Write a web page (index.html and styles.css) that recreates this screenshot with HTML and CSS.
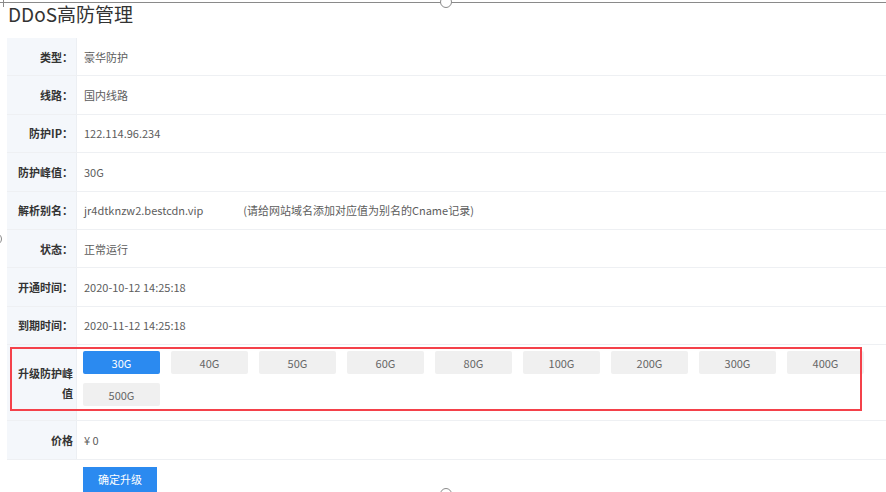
FILE: index.html
```html
<!DOCTYPE html>
<html lang="zh-CN">
<head>
  <meta charset="UTF-8">
  <meta name="viewport" content="width=device-width, initial-scale=1.0">
  <title>DDoS高防管理</title>
  <link rel="stylesheet" href="styles.css">
</head>
<body>
  <div class="frame">
    <h1 class="page-title">DDoS高防管理</h1>

    <div class="info-table">
      <div class="row"><div class="label">类型：</div><div class="value">豪华防护</div></div>
      <div class="row"><div class="label">线路：</div><div class="value">国内线路</div></div>
      <div class="row"><div class="label">防护IP：</div><div class="value">122.114.96.234</div></div>
      <div class="row"><div class="label">防护峰值：</div><div class="value">30G</div></div>
      <div class="row">
        <div class="label">解析别名：</div>
        <div class="value">jr4dtknzw2.bestcdn.vip<span class="hint">(请给网站域名添加对应值为别名的Cname记录)</span></div>
      </div>
      <div class="row"><div class="label">状态：</div><div class="value">正常运行</div></div>
      <div class="row"><div class="label">开通时间：</div><div class="value">2020-10-12 14:25:18</div></div>
      <div class="row"><div class="label">到期时间：</div><div class="value">2020-11-12 14:25:18</div></div>
      <div class="row row-upgrade">
        <div class="label">升级防护峰值</div>
        <div class="value">
          <div class="options">
            <button class="opt active">30G</button>
            <button class="opt">40G</button>
            <button class="opt">50G</button>
            <button class="opt">60G</button>
            <button class="opt">80G</button>
            <button class="opt">100G</button>
            <button class="opt">200G</button>
            <button class="opt">300G</button>
            <button class="opt">400G</button>
            <button class="opt">500G</button>
          </div>
        </div>
        <div class="mark"></div>
      </div>
      <div class="row"><div class="label">价格</div><div class="value">¥ 0</div></div>
    </div>

    <div class="actions"><button class="btn-primary">确定升级</button></div>

    <!-- selection frame handles -->
    <div class="edge-top"></div>
    <div class="edge-tick"></div>
    <div class="handle handle-top"></div>
    <div class="handle handle-bottom"></div>
    <div class="handle handle-left"></div>
  </div>
</body>
</html>
```

FILE: styles.css
```css
html, body { margin:0; padding:0; background:#fff; overflow:hidden; }
body { font-family:'Noto Sans CJK SC','Noto Sans',sans-serif; color:#333; font-size:11px; }
.frame { position:relative; width:886px; height:492px; overflow:hidden; }

.page-title { margin:0; padding:3px 0 0 8px; height:35px; font-size:19px; font-weight:normal; line-height:22px; color:#333; }

.info-table { margin-left:7px; width:900px; }
.row { position:relative; display:flex; min-height:38.4px; border-bottom:1px solid #eef0f3; box-sizing:border-box; }
.label { width:70px; flex:none; box-sizing:border-box; padding:0 3px 0 5px; background:#f4f7fb; border-right:1px solid #eceff3;
  display:flex; align-items:center; justify-content:flex-end; text-align:right; font-weight:bold; color:#333; line-height:20px; }
.value { flex:1; display:flex; align-items:center; padding-left:7px; color:#5c5c5c; }
.hint { margin-left:40px; }

.row-upgrade { height:76px; }
.row-upgrade .value { align-items:flex-start; padding-top:6px; padding-left:6px; }
.options { display:flex; flex-wrap:wrap; gap:9px 11px; width:800px; }
.opt { width:77px; height:23px; border:0; border-radius:2px; background:#f0f0f0; color:#666; font:inherit; font-size:11px; padding:0; }
.opt.active { background:#2b8af0; color:#fff; }
.mark { position:absolute; left:3px; top:2px; width:848px; height:60px; border:2px solid #f4414a; pointer-events:none; }

.actions { padding:7px 0 0 83px; }
.btn-primary { width:74px; height:25px; border:0; background:#2b8af0; color:#fff; font:inherit; font-size:11px; padding:0; }

.edge-top { position:absolute; left:0; top:2px; width:100%; height:1px; background:#8a8a8a; }
.edge-tick { position:absolute; left:3px; top:0; width:1px; height:7px; background:#8a8a8a; }
.handle { position:absolute; width:10px; height:10px; border:1px solid #8a8a8a; border-radius:50%; background:#fff; }
.handle-top { left:440px; top:-4px; }
.handle-bottom { left:440px; top:488px; }
.handle-left { left:-10px; top:233px; }
```
